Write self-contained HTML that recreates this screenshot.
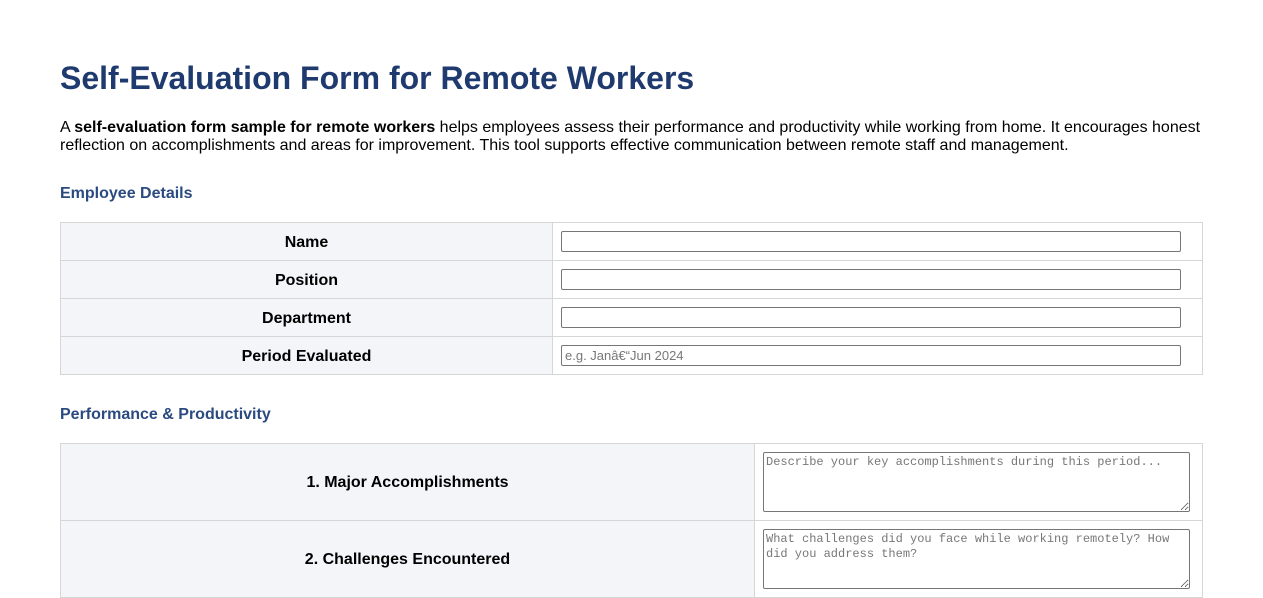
<!DOCTYPE html>
<html><head><meta charset="utf-8"><style>
html,body{overflow:hidden}
body{margin:0;font-family:"Liberation Sans",Arial,sans-serif;color:#000;background:#fff}
.wrap{position:absolute;left:60px;top:0;width:1143px}
h1{position:absolute;top:60px;left:0;margin:0;font-size:32px;color:#1f3a6e;font-weight:bold;white-space:nowrap}
p.intro{position:absolute;top:119px;left:0;margin:0;font-size:16px;line-height:18px;width:1145px}
h2{position:absolute;left:0;margin:0;font-size:16px;color:#2a4a80;font-weight:bold}
table{position:absolute;left:0;border-collapse:collapse;width:1143px}
td{border:1px solid #d6d6d6;padding:0}
td.l{background:#f4f5f9;font-weight:bold;font-size:16px;text-align:center;padding-top:2px}
input{box-sizing:border-box;width:620px;height:21px;border:1px solid #767676;border-radius:2px;margin-left:8px;font-family:"Liberation Sans",sans-serif;font-size:13px;padding:1px 3px;display:block}
input::placeholder{color:#777}
textarea{box-sizing:border-box;width:427px;height:60px;border:1px solid #767676;border-radius:2px;margin-left:8px;font-family:"Liberation Mono",monospace;font-size:12px;line-height:15px;padding:2px 2px;display:block;resize:vertical}
textarea::placeholder{color:#777}
</style></head><body><div class="wrap">
<h1>Self-Evaluation Form for Remote Workers</h1>
<p class="intro">A <b>self-evaluation form sample for remote workers</b> helps employees assess their performance and productivity while working from home. It encourages honest reflection on accomplishments and areas for improvement. This tool supports effective communication between remote staff and management.</p>
<h2 style="top:185px">Employee Details</h2>
<table style="top:222px">
<tr style="height:38px"><td class="l" style="width:491px">Name</td><td><input></td></tr>
<tr style="height:38px"><td class="l">Position</td><td><input></td></tr>
<tr style="height:38px"><td class="l">Department</td><td><input></td></tr>
<tr style="height:38px"><td class="l">Period Evaluated</td><td><input placeholder="e.g. Janâ€“Jun 2024"></td></tr>
</table>
<h2 style="top:406px">Performance &amp; Productivity</h2>
<table style="top:443px">
<tr style="height:77px"><td class="l" style="width:693px">1. Major Accomplishments</td><td><textarea placeholder="Describe your key accomplishments during this period..."></textarea></td></tr>
<tr style="height:77px"><td class="l">2. Challenges Encountered</td><td><textarea placeholder="What challenges did you face while working remotely? How did you address them?"></textarea></td></tr>
</table>
</div></body></html>
